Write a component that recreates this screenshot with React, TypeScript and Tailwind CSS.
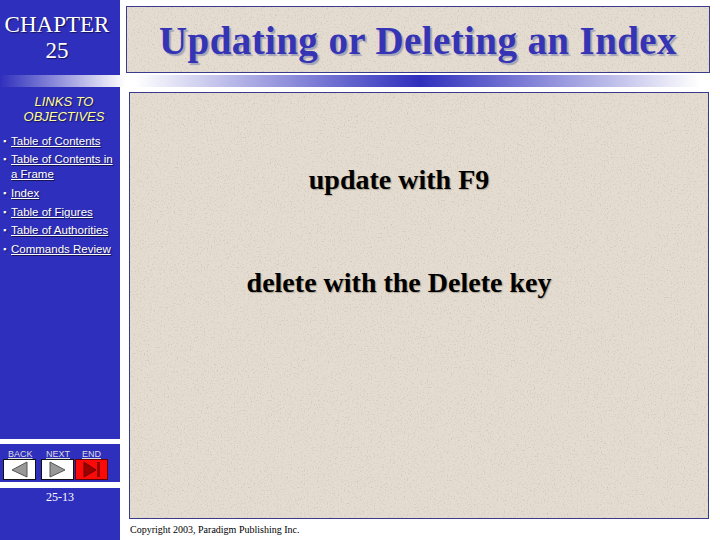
import React from 'react';

const links = [
  { label: 'Table of Contents', top: 'mt-0' },
  { label: 'Table of Contents in a Frame', top: 'mt-[3px]' },
  { label: 'Index', top: 'mt-[4px]' },
  { label: 'Table of Figures', top: 'mt-[4px]' },
  { label: 'Table of Authorities', top: 'mt-[3px]' },
  { label: 'Commands Review', top: 'mt-[4px]' },
];

function Paper({ id, className, children }: { id: string; className: string; children: React.ReactNode }) {
  return (
    <div className={`relative overflow-hidden border border-[#3a3a8c] bg-[#e4dcd0] ${className}`}>
      <svg className="absolute inset-0 w-full h-full" aria-hidden="true">
        <filter id={id}>
          <feTurbulence type="fractalNoise" baseFrequency="0.7" numOctaves="2" seed="4" />
          <feColorMatrix values="0 0 0 0 0.5  0 0 0 0 0.45  0 0 0 0 0.38  1.6 0 0 0 -0.85" />
        </filter>
        <rect width="100%" height="100%" filter={`url(#${id})`} />
      </svg>
      {children}
    </div>
  );
}

function NavButton({ red, children }: { red?: boolean; children: React.ReactNode }) {
  return (
    <div className={`w-[33px] h-[21px] border ${red ? 'border-[#660000] bg-[#fb0a0a]' : 'border-[#111] bg-white'}`}>
      <svg viewBox="0 0 31 19" className="w-full h-full">{children}</svg>
    </div>
  );
}

export default function App() {
  return (
    <div className="w-[720px] h-[540px] overflow-hidden bg-white font-['Liberation_Serif',serif]">
      <div className="flex h-[75px]">
        <div className="w-[120px] h-full bg-[#2f2fbd] text-white text-center text-[23px] leading-[26px] pt-[12px] pr-[6px] [text-shadow:1px_1px_1px_#15155a]">
          <div>CHAPTER</div>
          <div>25</div>
        </div>
        <Paper id="paper-title" className="w-[584px] h-[67px] ml-[6px] mt-[6px] pt-[2px] flex items-center justify-center">
          <h1 className="relative text-[#3434b4] font-bold text-[39px] leading-none tracking-[0.4px] [text-shadow:2px_2px_1px_#a3a3b8]">
            Updating or Deleting an Index
          </h1>
        </Paper>
      </div>

      <div className="h-[12px] bg-[linear-gradient(90deg,#2f2fbd_0px,#ffffff_125px,#ffffff_135px,#2f2fbd_420px,#ffffff_700px)]" />

      <div className="flex h-[453px]">
        <div className="w-[120px] flex flex-col shrink-0">
          <div className="h-[352px] bg-[#2f2fbd] font-['Liberation_Sans',sans-serif]">
            <div className="pt-[7px] pl-[8px] text-center italic text-[13px] leading-[15px] text-[#ffff99] [text-shadow:1px_1px_1px_#15155a]">
              <div>LINKS TO</div>
              <div>OBJECTIVES</div>
            </div>
            <ul className="mt-[10px] pr-[4px] text-white text-[11.5px] leading-[15px] [text-shadow:1px_1px_1px_#15155a]">
              {links.map((link) => (
                <li key={link.label} className={`flex ${link.top}`}>
                  <span className="w-[11px] pl-[3px] shrink-0 text-[9px]">▪</span>
                  <a className="underline">{link.label}</a>
                </li>
              ))}
            </ul>
          </div>
          <div className="h-[38px] mt-[5px] bg-[#2f2fbd] flex flex-col">
            <div className="flex font-['Liberation_Sans',sans-serif] text-[9px] leading-[10px] text-[#ddd] underline pt-[5px] h-[15px]">
              <span className="ml-[8px] w-[38px]">BACK</span>
              <span className="w-[36px]">NEXT</span>
              <span>END</span>
            </div>
            <div className="flex pl-[3px]">
              <NavButton>
                <polygon points="23,2 23,17 8,10" fill="#999" stroke="#555" strokeWidth="1" />
              </NavButton>
              <div className="w-[5px]" />
              <NavButton>
                <polygon points="8,2 8,17 23,10" fill="#999" stroke="#555" strokeWidth="1" />
              </NavButton>
              <div className="w-[1px]" />
              <NavButton red>
                <polygon points="8,2 8,17 20,10" fill="#990000" stroke="#770000" strokeWidth="1" />
                <rect x="21" y="2" width="3" height="15" fill="#990000" />
              </NavButton>
            </div>
          </div>
          <div className="flex-1 mt-[6px] bg-[#2f2fbd] text-center text-white text-[12px] leading-[15px] pt-[2px]">
            25-13
          </div>
        </div>

        <div className="ml-[9px] pt-[5px]">
          <Paper id="paper-main" className="w-[580px] h-[427px] pr-[40px] flex flex-col items-center text-black font-bold text-[28px] leading-[30px] [text-shadow:1px_1px_1px_#aaa294]">
            <div className="relative mt-[72px]">update with F9</div>
            <div className="relative mt-[73px]">delete with the Delete key</div>
          </Paper>
          <div className="mt-[4px] pl-[1px] text-[10px] leading-[14px] text-black">Copyright 2003, Paradigm Publishing Inc.</div>
        </div>
      </div>
    </div>
  );
}
